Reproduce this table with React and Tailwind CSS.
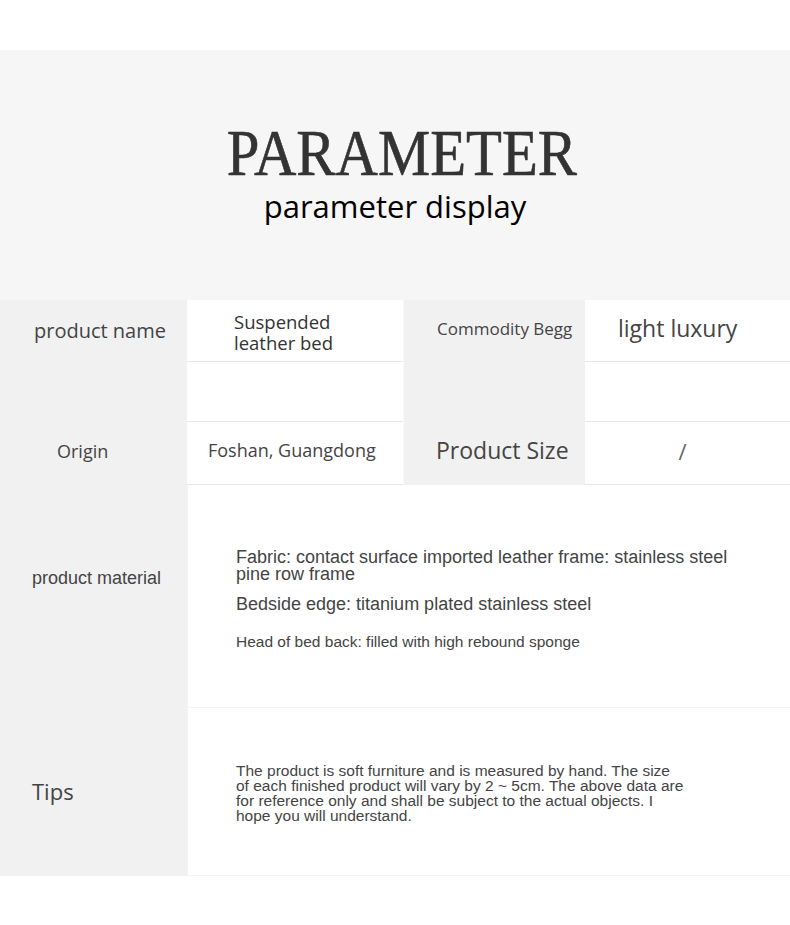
export default function App() {
  const sans = { fontFamily: '"Open Sans", "Liberation Sans", sans-serif' }
  const narrow = { fontFamily: '"Liberation Sans", sans-serif' }
  return (
    <div className="w-[790px] h-[925px] bg-white text-[#444]" style={sans}>
      <div className="h-[50px]" />
      <div className="h-[250px] bg-[#f6f6f6] flex flex-col items-center pt-[70px]">
        <h1
          className="text-[66px] leading-[66px] text-[#333] ml-[14px] scale-x-[0.89] [-webkit-text-stroke:0.6px_#333]"
          style={{ fontFamily: '"Liberation Serif", serif' }}
        >
          PARAMETER
        </h1>
        <p className="text-[31px] leading-[34px] mt-[3px] text-black">parameter display</p>
      </div>

      <div className="grid grid-cols-[187px_216px_182px_205px] grid-rows-[62px_60px_63px]">
        <div className="bg-[#f1f1f1] flex items-center pl-[34px] text-[20px]">product name</div>
        <div className="bg-white border-b border-[#e8e8e8] flex items-center pl-[47px] text-[18.5px] leading-[21px] text-[#333] pt-[2px]">
          Suspended<br />leather bed
        </div>
        <div className="bg-[#f1f1f1] border-l border-[#fafafa] flex items-center pl-[33px] text-[17px] pb-[4px]">Commodity Begg</div>
        <div className="bg-white border-b border-[#e8e8e8] flex items-center pl-[33px] text-[23px] pb-[4px]">light luxury</div>

        <div className="bg-[#f1f1f1]" />
        <div className="bg-white border-b border-[#e8e8e8]" />
        <div className="bg-[#f1f1f1] border-l border-[#fafafa]" />
        <div className="bg-white border-b border-[#e8e8e8]" />

        <div className="bg-[#f1f1f1] flex items-center pl-[57px] text-[18px] pb-[4px]">Origin</div>
        <div className="bg-white border-b border-[#e8e8e8] flex items-center pl-[21px] text-[18px] pb-[6px]">Foshan, Guangdong</div>
        <div className="bg-[#f1f1f1] border-l border-[#fafafa] flex items-center pl-[32px] text-[23px] pb-[6px]">Product Size</div>
        <div className="bg-white border-b border-[#e8e8e8] flex items-center justify-center text-[22px] text-[#666] pr-[10px] pb-[4px]">/</div>
      </div>

      <div className="grid grid-cols-[187px_1fr]" style={narrow}>
        <div className="bg-[#f1f1f1] h-[223px] pl-[32px] pt-[83px] text-[18px] leading-[20px]">product material</div>
        <div className="bg-white border-b border-[#e8e8e8] border-l border-[#f4f4f4] pl-[48px] pt-[64px]">
          <p className="text-[18px] leading-[17px] w-[500px]">
            Fabric: contact surface imported leather frame: stainless steel pine row frame
          </p>
          <p className="text-[18px] leading-[17px] mt-[13px]">Bedside edge: titanium plated stainless steel</p>
          <p className="text-[15.5px] leading-[17px] mt-[20px]">Head of bed back: filled with high rebound sponge</p>
        </div>

        <div className="bg-[#f1f1f1] h-[168px] flex items-center pl-[32px] text-[22px] pb-[2px]" style={sans}>Tips</div>
        <div className="bg-white border-b border-[#e8e8e8] border-l border-[#f4f4f4] pl-[48px] pt-[55px]">
          <p className="text-[15.5px] leading-[15px] whitespace-nowrap">
            The product is soft furniture and is measured by hand. The size<br />
            of each finished product will vary by 2 ~ 5cm. The above data are<br />
            for reference only and shall be subject to the actual objects. I<br />
            hope you will understand.
          </p>
        </div>
      </div>
    </div>
  )
}
